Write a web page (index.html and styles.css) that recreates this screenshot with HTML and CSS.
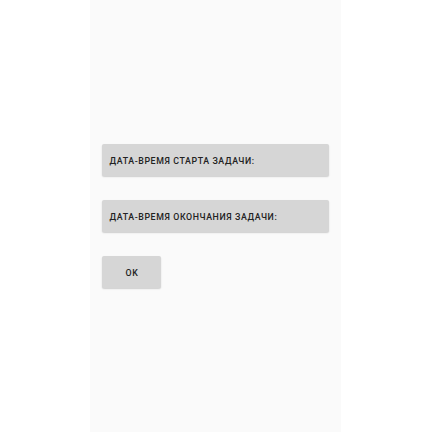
FILE: index.html
```html
<!DOCTYPE html>
<html lang="ru">
<head>
<meta charset="utf-8">
<link rel="stylesheet" href="styles.css">
</head>
<body>
<div class="screen">
  <div class="stack">
    <div class="btn wide">ДАТА-ВРЕМЯ СТАРТА ЗАДАЧИ:</div>
    <div class="btn wide">ДАТА-ВРЕМЯ ОКОНЧАНИЯ ЗАДАЧИ:</div>
    <div class="btn ok">OK</div>
  </div>
</div>
</body>
</html>
```
FILE: styles.css
```css
html, body {
  margin: 0;
  padding: 0;
  background: #ffffff;
}
.screen {
  margin-left: 90px;
  width: 251px;
  height: 432px;
  background: #fafafa;
  box-sizing: border-box;
  padding: 144px 12px 0 12px;
}
.stack {
  display: flex;
  flex-direction: column;
  align-items: stretch;
  gap: 24px;
}
.btn {
  height: 32px;
  box-sizing: border-box;
  padding-top: 2.5px;
  background: #d6d6d6;
  border-radius: 2px;
  box-shadow: 0 1px 1.5px rgba(0,0,0,0.18);
  display: flex;
  align-items: center;
  font-family: Roboto, "Liberation Sans", sans-serif;
  font-weight: 500;
  font-size: 8.8px;
  letter-spacing: 0.6px;
  color: #222222;
}
.wide {
  padding-left: 7.5px;
}
.ok {
  width: 59px;
  justify-content: center;
  align-self: flex-start;
  padding-left: 1px;
}
```
